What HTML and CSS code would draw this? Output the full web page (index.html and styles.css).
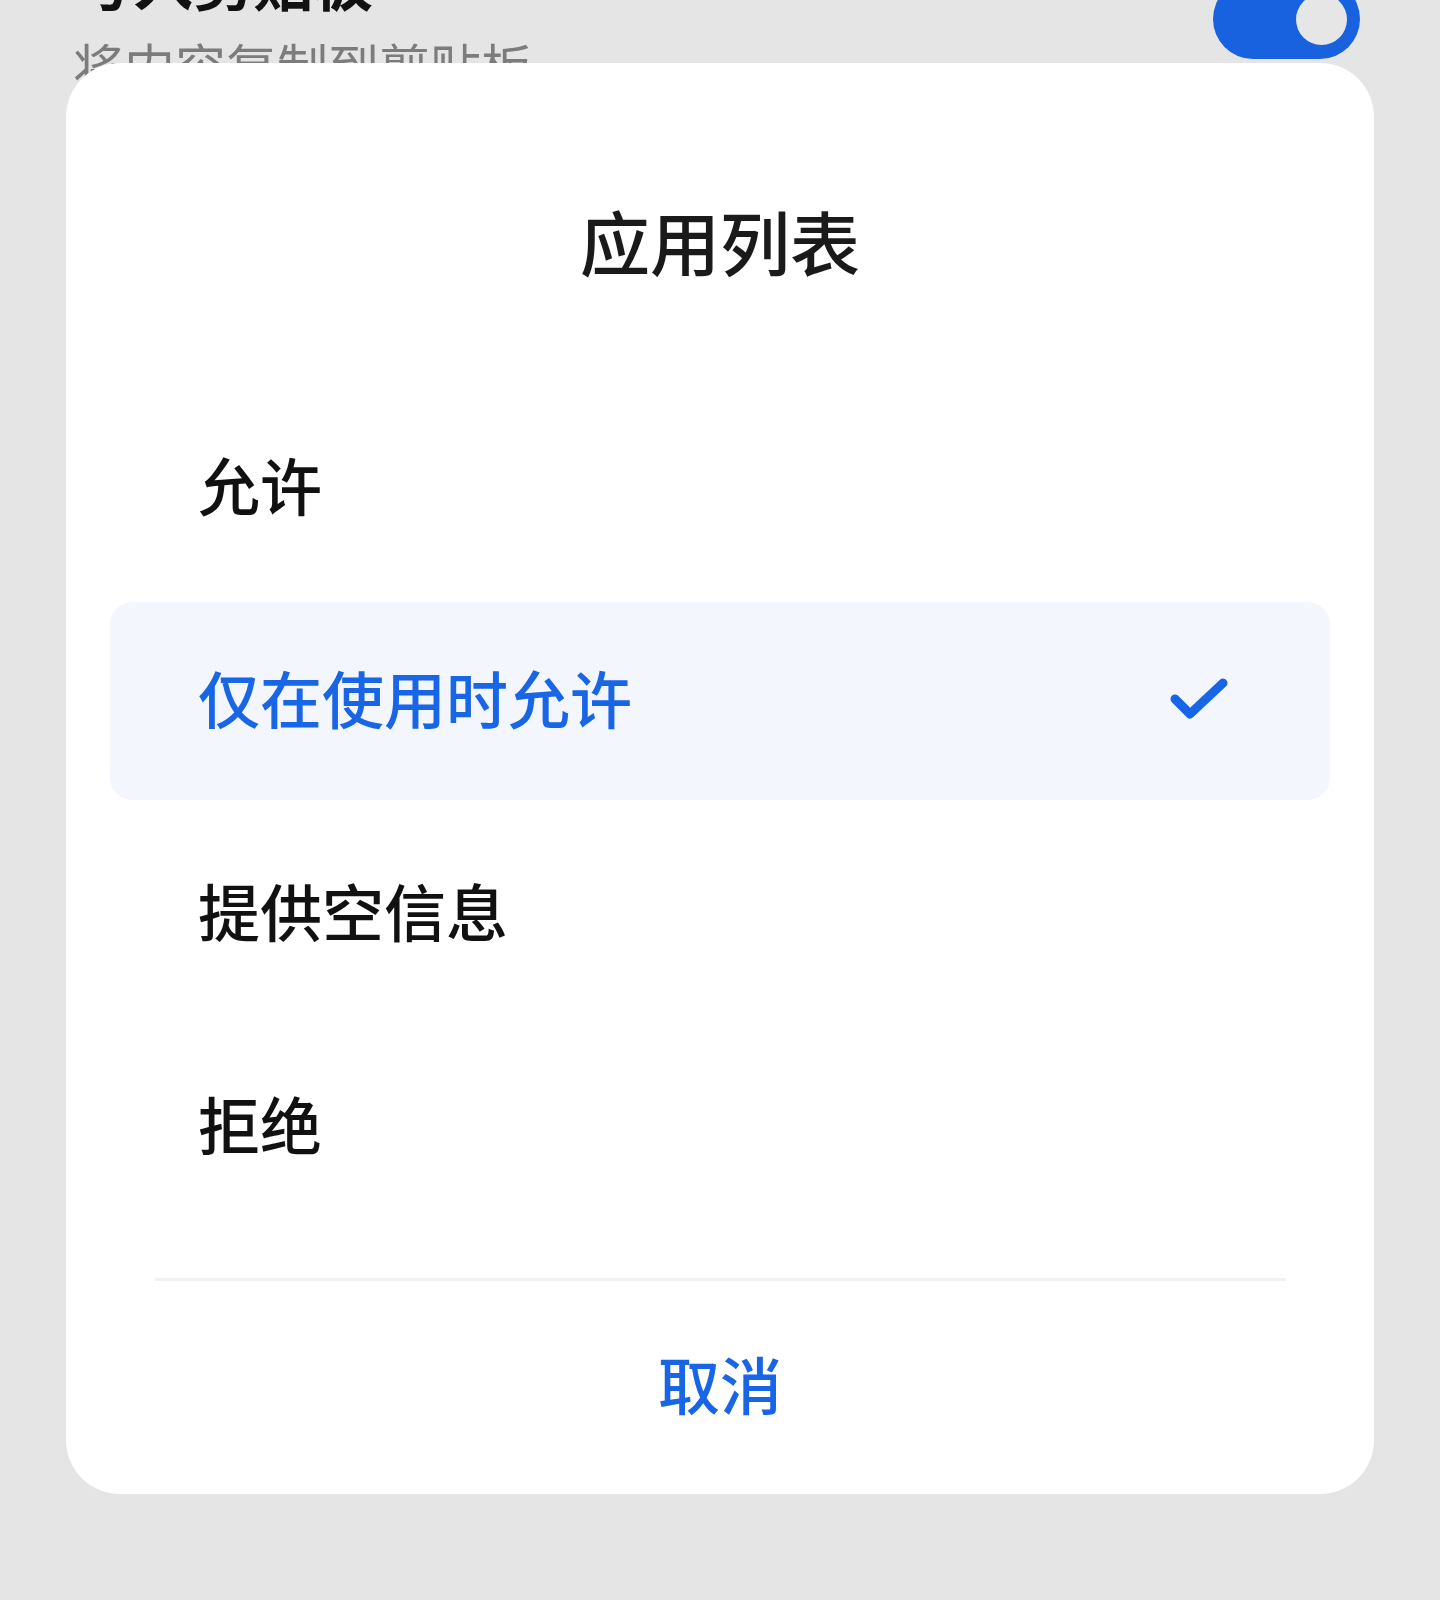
FILE: index.html
```html
<!DOCTYPE html>
<html lang="zh-CN">
<head>
<meta charset="utf-8">
<title>应用列表</title>
<link rel="stylesheet" href="styles.css">
</head>
<body>
<div class="page">
  <div class="setting-row">
    <div class="setting-text">
      <div class="setting-title">写入剪贴板</div>
      <div class="setting-sub">将内容复制到剪贴板</div>
    </div>
    <div class="toggle"><span class="knob"></span></div>
  </div>

  <div class="dialog">
    <div class="dialog-title">应用列表</div>
    <div class="options">
      <div class="option">允许</div>
      <div class="option selected">
        <span>仅在使用时允许</span>
        <svg class="check" width="62" height="52" viewBox="0 0 62 52"><path d="M7 24 L22 39 L55 8" fill="none" stroke="#1865e6" stroke-width="9" stroke-linecap="round" stroke-linejoin="round"/></svg>
      </div>
      <div class="option">提供空信息</div>
      <div class="option">拒绝</div>
    </div>
    <div class="divider"></div>
    <div class="cancel">取消</div>
  </div>
</div>
</body>
</html>
```
FILE: styles.css
```css
html, body {
  margin: 0;
  padding: 0;
}
body {
  background: #e5e5e5;
  font-family: "Noto Sans CJK SC", "Noto Sans", sans-serif;
  width: 1440px;
  height: 1600px;
  overflow: hidden;
}
.page {
  position: relative;
  display: flow-root;
  width: 1440px;
  height: 1600px;
}
.setting-row {
  display: flex;
  align-items: flex-start;
  justify-content: space-between;
  margin-top: -56px;
  padding: 0 80px 0 73px;
}
.setting-text {
  display: flex;
  flex-direction: column;
  gap: 18px;
}
.setting-title {
  font-size: 60px;
  line-height: 72px;
  font-weight: 700;
  color: #111;
}
.setting-sub {
  font-size: 51px;
  line-height: 62px;
  color: #7c7c7c;
}
.toggle {
  margin-top: 35px;
  width: 147px;
  height: 80px;
  border-radius: 40px;
  background: #1862e0;
  display: flex;
  align-items: center;
  justify-content: flex-end;
  padding-right: 13px;
  box-sizing: border-box;
}
.knob {
  width: 51px;
  height: 51px;
  border-radius: 50%;
  background: #e6e6e6;
}
.dialog {
  position: absolute;
  left: 66px;
  top: 63px;
  width: 1308px;
  height: 1431px;
  background: #fff;
  border-radius: 54px;
  display: flex;
  flex-direction: column;
  box-sizing: border-box;
  padding-top: 136px;
}
.dialog-title {
  text-align: center;
  font-size: 70px;
  line-height: 84px;
  font-weight: 500;
  color: #1a1a1a;
}
.options {
  margin-top: 106px;
  padding: 0 44px;
  display: flex;
  flex-direction: column;
  gap: 15px;
}
.option {
  height: 198px;
  box-sizing: border-box;
  display: flex;
  align-items: center;
  justify-content: space-between;
  padding: 0 100px 8px 88px;
  font-size: 62px;
  font-weight: 500;
  color: #111;
  border-radius: 22px;
}
.option.selected {
  background: #f3f7fd;
  color: #1865e6;
}
.check {
  display: block;
  margin-top: 8px;
}
.divider {
  margin: 52px 88px 0 89px;
  height: 3px;
  background: #f1f1f1;
}
.cancel {
  height: 212px;
  box-sizing: border-box;
  padding-bottom: 8px;
  display: flex;
  align-items: center;
  justify-content: center;
  font-size: 62px;
  font-weight: 500;
  color: #1865e6;
}
```
